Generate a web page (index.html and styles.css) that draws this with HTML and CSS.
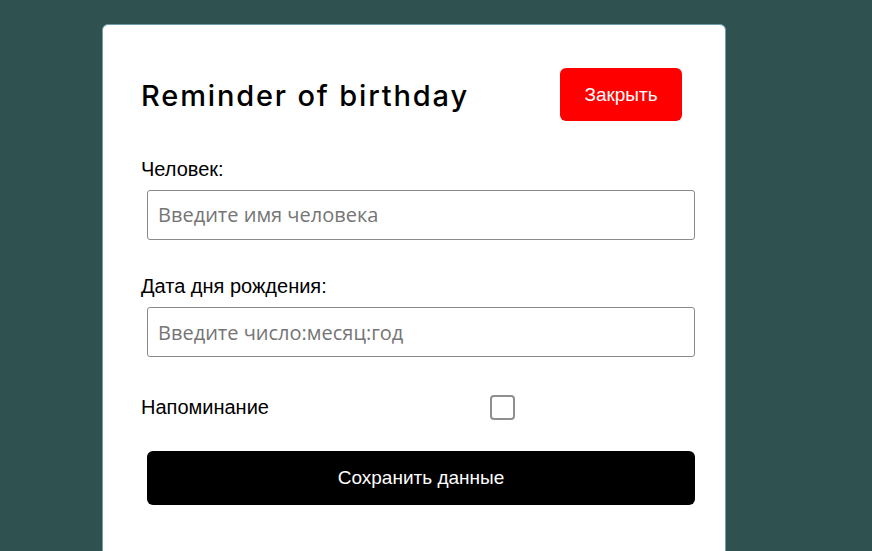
FILE: index.html
```html
<!DOCTYPE html>
<html lang="ru">
<head>
<meta charset="utf-8">
<title>Reminder of birthday</title>
<link rel="stylesheet" href="styles.css">
</head>
<body>
<div class="card">
  <div class="header">
    <h1 class="title">Reminder of birthday</h1>
    <button class="close-btn" type="button">Закрыть</button>
  </div>
  <form class="form">
    <label class="label" for="person">Человек:</label>
    <input class="field" id="person" type="text" placeholder="Введите имя человека">
    <label class="label label-second" for="date">Дата дня рождения:</label>
    <input class="field" id="date" type="text" placeholder="Введите число:месяц:год">
    <div class="remind-row">
      <span class="remind-label">Напоминание</span>
      <input class="check" type="checkbox">
    </div>
    <button class="save-btn" type="button">Сохранить данные</button>
  </form>
</div>
</body>
</html>
```

FILE: styles.css
```css
html, body {
  margin: 0;
  padding: 0;
  height: 100%;
  overflow: hidden;
}
body {
  background: #2f5150;
  font-family: "Liberation Sans", Arial, sans-serif;
}
.card {
  box-sizing: border-box;
  margin: 24px 0 0 102px;
  width: 624px;
  height: 560px;
  background: #ffffff;
  border: 1px solid #6f9bb0;
  border-radius: 6px;
  padding: 43px 30px 0 38px;
}
.header {
  display: flex;
  align-items: center;
  justify-content: space-between;
  height: 53px;
  padding-right: 13px;
}
.title {
  margin: 0;
  font-family: "Inter", "Liberation Sans", sans-serif;
  font-weight: 500;
  font-size: 29px;
  line-height: 34px;
  color: #000;
  letter-spacing: 1.85px;
  position: relative;
  top: 1px;
}
.close-btn {
  width: 122px;
  height: 53px;
  border: none;
  border-radius: 6px;
  background: #ff0000;
  color: #ffffff;
  font-family: "Liberation Sans", Arial, sans-serif;
  font-size: 19px;
  padding: 0;
}
.form {
  display: flex;
  flex-direction: column;
  align-items: flex-start;
}
.label {
  display: block;
  margin-top: 36.5px;
  font-size: 20px;
  line-height: 23px;
  color: #000;
}
.label-second {
  margin-top: 35.5px;
}
.field {
  box-sizing: border-box;
  margin: 9px 0 0 6px;
  width: 548px;
  height: 50px;
  border: 1px solid #8a8a8a;
  border-radius: 3px;
  padding: 0 10px;
  font-family: "Open Sans", sans-serif;
  font-size: 20px;
  color: #000;
  outline: none;
}
.field::placeholder {
  color: #757575;
}
.remind-row {
  display: flex;
  align-items: center;
  margin-top: 38px;
  height: 25px;
}
.remind-label {
  width: 349px;
  font-size: 20px;
  line-height: 23px;
  color: #000;
}
.check {
  appearance: none;
  -webkit-appearance: none;
  margin: 0;
  box-sizing: border-box;
  width: 25px;
  height: 25px;
  border: 2px solid #8f8f8f;
  border-radius: 4px;
  background: #fff;
}
.save-btn {
  margin: 31px 0 0 6px;
  width: 548px;
  height: 54px;
  border: none;
  border-radius: 6px;
  background: #000000;
  color: #ffffff;
  font-family: "Liberation Sans", Arial, sans-serif;
  font-size: 19px;
  padding: 0;
}
```
